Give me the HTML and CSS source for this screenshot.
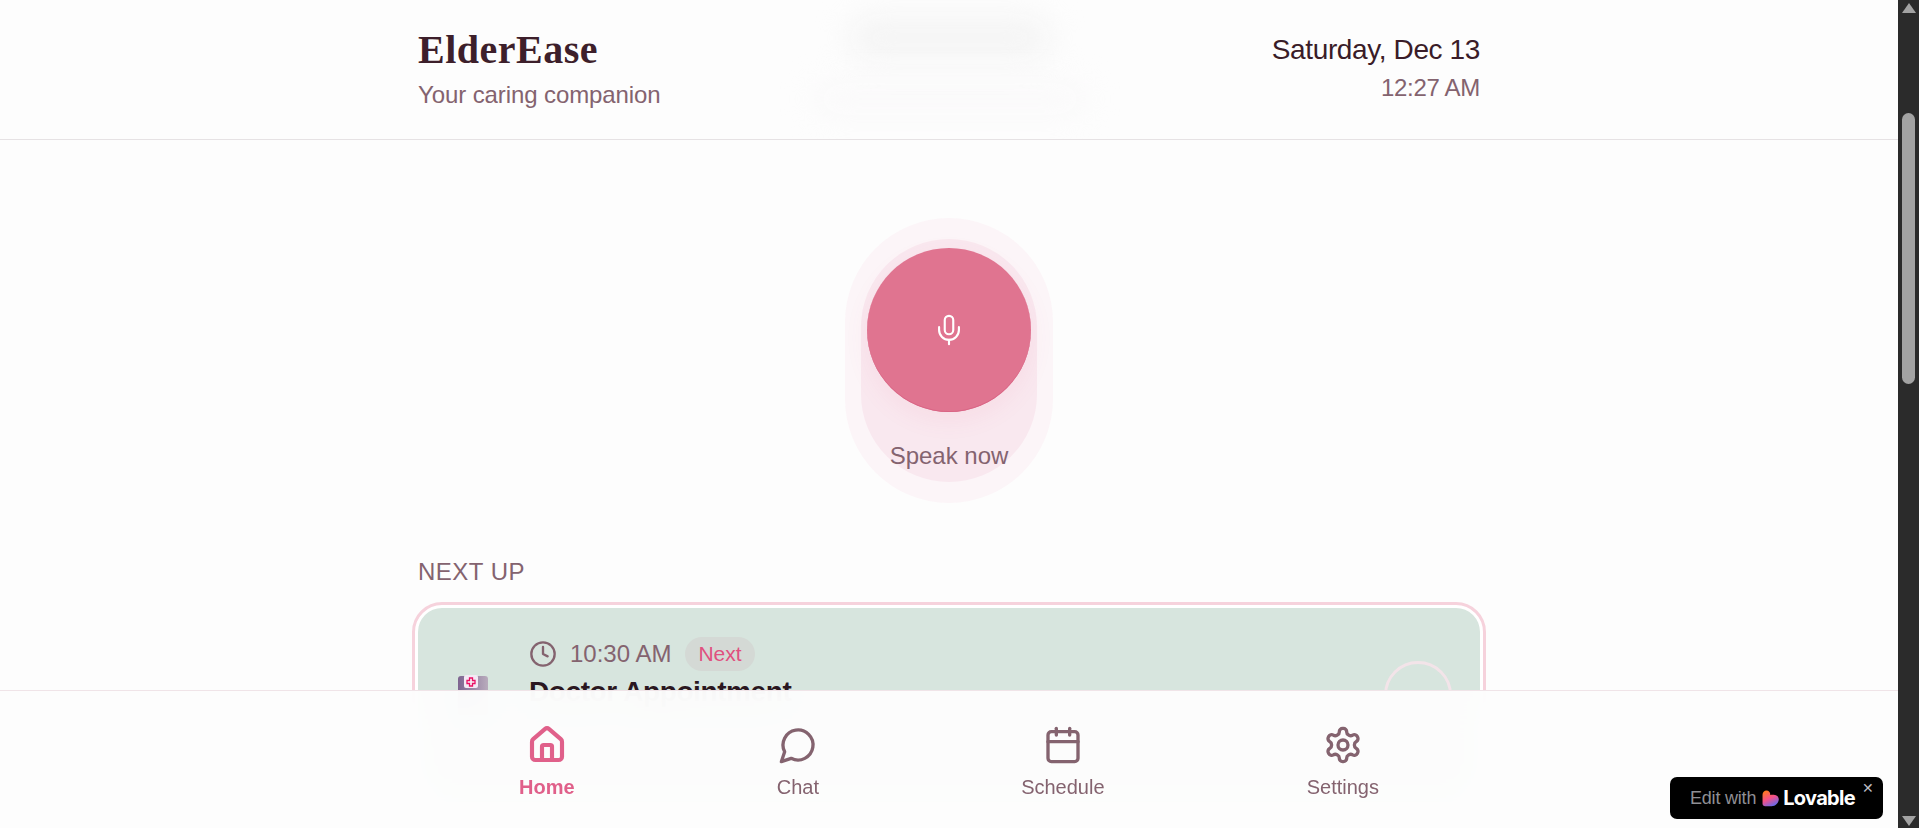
FILE: index.html
```html
<!DOCTYPE html>
<html lang="en">

<head>
    <meta charset="UTF-8" />
    <meta name="viewport" content="width=device-width, initial-scale=1.0" />
    <title>ElderEase</title>
    <link rel="stylesheet" href="styles.css">
</head>

<body>

    <div class="viewport">
        <header class="topbar">
            <div class="blur-blob blob-one"></div>
            <div class="blur-blob blob-two"></div>
            <div class="topbar-inner">
                <div>
                    <h1 class="brand">ElderEase</h1>
                    <p class="tagline">Your caring companion</p>
                </div>
                <div class="clock">
                    <p class="clock-date">Saturday, Dec 13</p>
                    <p class="clock-time">12:27 AM</p>
                </div>
            </div>
        </header>

        <main class="content">
            <section class="voice">
                <div class="voice-orb">
                    <button class="mic-button" title="Speak now">
                        <svg class="icon mic-icon" viewBox="0 0 24 24">
                            <path d="M12 2a3 3 0 0 0-3 3v7a3 3 0 0 0 6 0V5a3 3 0 0 0-3-3Z" />
                            <path d="M19 10v2a7 7 0 0 1-14 0v-2" />
                            <line x1="12" x2="12" y1="19" y2="22" />
                        </svg>
                    </button>
                    <p class="voice-label">Speak now</p>
                </div>
            </section>

            <section>
                <h2 class="section-title">NEXT UP</h2>
                <div class="next-ring">
                    <div class="next-card">
                        <svg class="med-icon" viewBox="0 0 30 40">
                            <defs>
                                <linearGradient id="medFill" x1="0" x2="1" y1="0" y2="0">
                                    <stop offset="0" stop-color="#7d6490" />
                                    <stop offset="1" stop-color="#b9acbd" />
                                </linearGradient>
                            </defs>
                            <rect x="0" y="1" width="30" height="39" rx="3" fill="url(#medFill)" />
                            <rect x="6" y="0" width="14" height="13" rx="2" fill="#f4e9f5" />
                            <path d="M11.500 3h3v2.500H17v3h-2.500V11h-3V8.500H9v-3h2.500Z" stroke="#ea0f64" stroke-width="1.300" fill="#f9eef6" />
                        </svg>
                        <div class="next-info">
                            <div class="next-meta">
                                <svg class="icon time-icon" viewBox="0 0 24 24">
                                    <circle cx="12" cy="12" r="10" />
                                    <polyline points="12 6 12 12 16 14" />
                                </svg>
                                <span class="next-time">10:30 AM</span>
                                <span class="next-badge">Next</span>
                            </div>
                            <h3 class="next-title">Doctor Appointment</h3>
                        </div>
                        <div class="next-check"></div>
                    </div>
                </div>
            </section>
        </main>

        <nav class="bottom-nav">
            <div class="bottom-nav-inner">
                <a class="nav-item active">
                    <svg class="icon nav-icon" viewBox="0 0 24 24">
                        <path d="M15 21v-8a1 1 0 0 0-1-1h-4a1 1 0 0 0-1 1v8" />
                        <path d="M3 10a2 2 0 0 1 .709-1.528l7-5.999a2 2 0 0 1 2.582 0l7 5.999A2 2 0 0 1 21 10v9a2 2 0 0 1-2 2H5a2 2 0 0 1-2-2z" />
                    </svg>
                    <span>Home</span>
                </a>
                <a class="nav-item">
                    <svg class="icon nav-icon" viewBox="0 0 24 24">
                        <path d="M7.9 20A9 9 0 1 0 4 16.1L2 22Z" />
                    </svg>
                    <span>Chat</span>
                </a>
                <a class="nav-item">
                    <svg class="icon nav-icon" viewBox="0 0 24 24">
                        <path d="M8 2v4" />
                        <path d="M16 2v4" />
                        <rect width="18" height="18" x="3" y="4" rx="2" />
                        <path d="M3 10h18" />
                    </svg>
                    <span>Schedule</span>
                </a>
                <a class="nav-item">
                    <svg class="icon nav-icon" viewBox="0 0 24 24">
                        <path d="M12.22 2h-.44a2 2 0 0 0-2 2v.18a2 2 0 0 1-1 1.73l-.43.25a2 2 0 0 1-2 0l-.15-.08a2 2 0 0 0-2.73.73l-.22.38a2 2 0 0 0 .73 2.73l.15.1a2 2 0 0 1 1 1.72v.51a2 2 0 0 1-1 1.74l-.15.09a2 2 0 0 0-.73 2.73l.22.38a2 2 0 0 0 2.73.73l.15-.08a2 2 0 0 1 2 0l.43.25a2 2 0 0 1 1 1.73V20a2 2 0 0 0 2 2h.44a2 2 0 0 0 2-2v-.18a2 2 0 0 1 1-1.73l.43-.25a2 2 0 0 1 2 0l.15.08a2 2 0 0 0 2.73-.73l.22-.39a2 2 0 0 0-.73-2.73l-.15-.08a2 2 0 0 1-1-1.74v-.5a2 2 0 0 1 1-1.74l.15-.09a2 2 0 0 0 .73-2.73l-.22-.38a2 2 0 0 0-2.73-.73l-.15.08a2 2 0 0 1-2 0l-.43-.25a2 2 0 0 1-1-1.73V4a2 2 0 0 0-2-2z" />
                        <circle cx="12" cy="12" r="3" />
                    </svg>
                    <span>Settings</span>
                </a>
            </div>
        </nav>

        <div class="lovable-badge">
            <span class="lovable-edit">Edit with</span>
            <svg class="lovable-heart" viewBox="0 0 16 16">
                <defs>
                    <linearGradient id="heartFill" x1="0.2" x2="0.7" y1="0" y2="1">
                        <stop offset="0" stop-color="#ff7a1a" />
                        <stop offset="0.5" stop-color="#f4508a" />
                        <stop offset="1" stop-color="#5d6bf0" />
                    </linearGradient>
                </defs>
                <path d="M.5 4.500C.5 2 2.200 .4 4.200 .4 6.400 .4 7.800 2 7.800 4.600c2.800-.6 8-.4 8 4.200 0 3.400-3 6.600-6.800 6.600H3C1.500 15.400.5 14.400.5 13Z" fill="url(#heartFill)" />
            </svg>
            <span class="lovable-name">Lovable</span>
            <span class="lovable-close">✕</span>
        </div>
    </div>

    <div class="scrollbar">
        <div class="scroll-arrow scroll-up"></div>
        <div class="scroll-thumb"></div>
        <div class="scroll-arrow scroll-down"></div>
    </div>

</body>

</html>
```

FILE: styles.css
```css
html,
body {
    margin: 0;
    padding: 0;
    height: 100%;
    overflow: hidden;
}

body {
    background: #fdfdfd;
    font-family: "Liberation Sans", Arial, sans-serif;
    color: #3a1c28;
    display: flex;
}

p,
h1,
h2,
h3 {
    margin: 0;
}

.viewport {
    flex: 1;
    height: 100%;
    position: relative;
    overflow: hidden;
}

.icon {
    fill: none;
    stroke: currentColor;
    stroke-width: 2;
    stroke-linecap: round;
    stroke-linejoin: round;
    display: block;
}

/* cabecera */
.topbar {
    height: 139px;
    border-bottom: 1px solid #e6e2e4;
    position: relative;
    overflow: hidden;
    display: flex;
    justify-content: center;
}

.blur-blob {
    position: absolute;
    background: #f3f3f3;
    border-radius: 30px;
    filter: blur(16px);
}

.blob-one {
    left: 850px;
    top: 20px;
    width: 200px;
    height: 36px;
}

.blob-two {
    left: 815px;
    top: 88px;
    width: 270px;
    height: 22px;
    background: #f9f8f9;
}

.topbar-inner {
    width: 1062px;
    display: flex;
    justify-content: space-between;
    align-items: flex-start;
    padding-top: 26px;
    position: relative;
}

.brand {
    font-family: "Liberation Serif", "Times New Roman", serif;
    font-size: 40px;
    line-height: 48px;
    font-weight: bold;
    letter-spacing: 0.5px;
    color: #3d1f2b;
}

.tagline {
    font-size: 24px;
    line-height: 32px;
    margin-top: 5px;
    letter-spacing: -0.1px;
    color: #84636f;
}

.clock {
    text-align: right;
    padding-top: 6px;
}

.clock-date {
    font-size: 28px;
    line-height: 36px;
    letter-spacing: -0.38px;
}

.clock-time {
    font-size: 24px;
    line-height: 32px;
    margin-top: 4px;
    letter-spacing: -0.3px;
    color: #84636f;
}

/* zona principal */
.content {
    width: 1062px;
    margin: 0 auto;
}

.voice {
    display: flex;
    justify-content: center;
    padding-top: 108px;
}

.voice-orb {
    width: 164px;
    display: flex;
    flex-direction: column;
    align-items: center;
    gap: 28px;
    position: relative;
}

.voice-orb::before,
.voice-orb::after {
    content: "";
    position: absolute;
    border-radius: 999px;
}

.voice-orb::before {
    inset: -30px -22px -31px;
    background: #fcf5f8;
}

.voice-orb::after {
    inset: -9px -6px -10px;
    background: #f9e8ef;
}

.mic-button {
    width: 164px;
    height: 164px;
    padding: 0;
    border: none;
    border-radius: 50%;
    background: #e07490;
    color: #fff;
    display: flex;
    align-items: center;
    justify-content: center;
    box-shadow: 0 8px 24px rgba(224, 90, 130, 0.08), inset 0 -1px 0 #d96585;
    position: relative;
    z-index: 1;
}

.mic-icon {
    width: 34px;
    height: 34px;
    stroke-width: 1.5;
}

.voice-label {
    font-size: 24px;
    line-height: 32px;
    color: #84636f;
    white-space: nowrap;
    position: relative;
    z-index: 1;
}

.section-title {
    font-size: 24px;
    line-height: 32px;
    font-weight: normal;
    margin-top: 84px;
    color: #84636f;
    letter-spacing: 0.5px;
}

.next-ring {
    margin-top: 14px;
    padding: 3px;
    margin-left: -6px;
    margin-right: -6px;
    border: 3px solid #f6d2dc;
    border-radius: 30px;
    background: #fff;
}

.next-card {
    height: 194px;
    box-sizing: border-box;
    background: #d7e5de;
    border-radius: 24px;
    display: flex;
    align-items: flex-start;
    padding: 29px 28px 0 40px;
}

.med-icon {
    width: 30px;
    height: 40px;
    margin-top: 38px;
    flex: none;
}

.next-info {
    flex: 1;
    margin-left: 41px;
}

.next-meta {
    display: flex;
    align-items: center;
    color: #84636f;
}

.time-icon {
    width: 28px;
    height: 28px;
    flex: none;
}

.next-time {
    font-size: 24px;
    line-height: 34px;
    margin-left: 13px;
}

.next-badge {
    font-size: 21px;
    line-height: 34px;
    padding: 0 13px;
    margin-left: 14px;
    border-radius: 999px;
    background: #d4d9d5;
    color: #e0507f;
}

.next-title {
    font-size: 28px;
    line-height: 36px;
    margin-top: 3px;
    letter-spacing: -0.4px;
    color: #2a1720;
}

.next-check {
    width: 68px;
    height: 68px;
    box-sizing: border-box;
    border: 3px solid #f3e4e9;
    border-radius: 50%;
    margin-top: 24px;
    flex: none;
}

/* barra inferior */
.bottom-nav {
    position: absolute;
    left: 0;
    right: 0;
    bottom: 0;
    height: 137px;
    border-top: 1px solid #f0e4e8;
    background: rgba(253, 253, 253, 0.96);
    backdrop-filter: blur(20px);
    display: flex;
    justify-content: center;
}

.bottom-nav-inner {
    width: 1062px;
    display: flex;
    justify-content: space-around;
    align-items: flex-start;
    padding-top: 34px;
}

.nav-item {
    display: flex;
    flex-direction: column;
    align-items: center;
    font-size: 20px;
    line-height: 28px;
    color: #84636f;
}

.nav-icon {
    width: 40px;
    height: 40px;
    margin-bottom: 8px;
}

.nav-item.active {
    color: #e0608a;
    font-weight: bold;
}

.nav-item.active .nav-icon {
    stroke-width: 2.5;
}

/* insignia */
.lovable-badge {
    position: absolute;
    left: 1670px;
    top: 777px;
    width: 213px;
    height: 42px;
    box-sizing: border-box;
    padding-left: 20px;
    border-radius: 7px;
    background: #000;
    display: flex;
    align-items: center;
}

.lovable-edit {
    font-size: 18px;
    letter-spacing: -0.2px;
    color: #8f8f94;
}

.lovable-heart {
    width: 17px;
    height: 17px;
    margin-left: 6px;
}

.lovable-name {
    font-family: "Inter", "Liberation Sans", sans-serif;
    font-size: 20px;
    font-weight: bold;
    letter-spacing: -0.7px;
    color: #fff;
    margin-left: 4px;
}

.lovable-close {
    position: absolute;
    right: 9px;
    top: 3px;
    font-size: 14px;
    color: #bdbdc2;
}

/* barra de scroll */
.scrollbar {
    width: 21px;
    flex: none;
    height: 100%;
    background: #2b2b2b;
    display: flex;
    flex-direction: column;
    align-items: center;
}

.scroll-arrow {
    width: 0;
    height: 0;
    border-left: 7px solid transparent;
    border-right: 7px solid transparent;
}

.scroll-up {
    margin-top: 3px;
    border-bottom: 10px solid #a3a3a3;
}

.scroll-down {
    margin-top: auto;
    margin-bottom: 2px;
    border-top: 10px solid #a3a3a3;
}

.scroll-thumb {
    width: 13px;
    height: 271px;
    margin-top: 100px;
    border-radius: 7px;
    background: #a3a3a3;
}
```
